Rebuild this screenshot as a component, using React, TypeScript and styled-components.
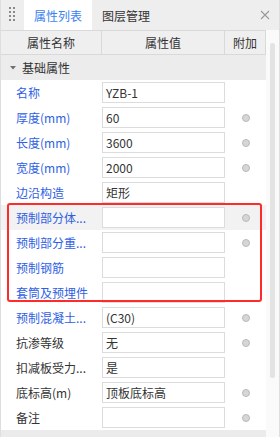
import React from 'react';
import styled, { createGlobalStyle } from 'styled-components';

const GlobalStyle = createGlobalStyle`
  html, body {
    margin: 0;
    padding: 0;
    background: #ffffff;
  }
  body {
    font-family: "Noto Sans CJK SC", "Noto Sans", sans-serif;
    font-size: 12px;
    color: #333;
  }
`;

const Panel = styled.div`
  width: 280px;
  height: 437px;
  box-sizing: border-box;
  border-left: 1px solid #dedede;
  border-right: 1px solid #dedede;
  display: flex;
  flex-direction: column;
  overflow: hidden;
`;

const TabBar = styled.div`
  height: 30px;
  flex-shrink: 0;
  display: flex;
  align-items: stretch;
  background: #eeeeee;
`;

const Grip = styled.div`
  width: 23px;
  display: flex;
  align-items: center;
  justify-content: center;
`;

const Tab = styled.div<{ $active?: boolean }>`
  display: flex;
  align-items: center;
  justify-content: center;
  padding: 0 10px;
  min-width: ${p => (p.$active ? '48px' : 'auto')};
  background: ${p => (p.$active ? '#ffffff' : 'transparent')};
  color: ${p => (p.$active ? '#3b82f0' : '#333')};
  font-size: 12px;
`;

const CloseButton = styled.div`
  margin-left: auto;
  width: 28px;
  display: flex;
  align-items: center;
  justify-content: center;
`;

const Body = styled.div`
  flex: 1;
  display: flex;
  min-height: 0;
`;

const Table = styled.div`
  width: 265px;
  display: flex;
  flex-direction: column;
`;

const Columns = `
  display: grid;
  grid-template-columns: 100px 124px 41px;
`;

const HeaderRow = styled.div`
  ${Columns}
  height: 23px;
  background: #efefef;
  border-top: 1px solid #d9d9d9;
  border-bottom: 1px solid #d9d9d9;
`;

const HeaderCell = styled.div`
  display: flex;
  align-items: center;
  justify-content: center;
  border-right: 1px solid #d9d9d9;
  color: #333;
  &:first-child { border-right: none; }
  &:nth-child(2) { border-left: 1px solid #d9d9d9; }
`;

const GroupRow = styled.div`
  height: 25px;
  display: flex;
  align-items: center;
  gap: 6px;
  padding-left: 9px;
  background: #ececec;
  color: #333;
`;

const Rows = styled.div`
  display: flex;
  flex-direction: column;
`;

const Marked = styled.div`
  position: relative;
  &::after {
    content: '';
    position: absolute;
    top: -2px;
    left: 6px;
    right: 4px;
    bottom: 3px;
    border: 2px solid #ff2a2a;
    border-radius: 3px;
    pointer-events: none;
  }
`;

const Row = styled.div<{ $hover?: boolean }>`
  ${Columns}
  height: 25px;
  background: ${p => (p.$hover ? '#f2f2f2' : '#ffffff')};
`;

const Label = styled.div<{ $linked?: boolean }>`
  display: flex;
  align-items: center;
  padding-left: 15px;
  white-space: nowrap;
  overflow: hidden;
  color: ${p => (p.$linked ? '#2f5fe3' : '#333')};
`;

const ValueCell = styled.div`
  display: flex;
  align-items: center;
  padding-left: 1px;
`;

const ValueBox = styled.div`
  box-sizing: border-box;
  width: 123px;
  height: 21px;
  border: 1px solid #dcdcdc;
  background: #ffffff;
  padding-left: 3px;
  display: flex;
  align-items: center;
  color: #333;
  font-size: 12px;
  white-space: nowrap;
  overflow: hidden;
`;

const ExtraCell = styled.div`
  display: flex;
  align-items: center;
  justify-content: center;
`;

const Dot = styled.span`
  width: 8px;
  height: 8px;
  box-sizing: border-box;
  border-radius: 50%;
  background: #d6d6d6;
  border: 1px solid #b9b9b9;
`;

const Footer = styled.div`
  height: 7px;
  background: #ebebeb;
`;

const ScrollColumn = styled.div`
  flex: 1;
  background: #fafafa;
  padding-top: 13px;
  padding-left: 4px;
`;

const Thumb = styled.div`
  width: 5px;
  height: 335px;
  border-radius: 2px;
  background: #e3e3e3;
`;

type Prop = {
  label: string;
  value: string;
  linked?: boolean;
  dot?: boolean;
  hover?: boolean;
};

const before: Prop[] = [
  { label: '名称', value: 'YZB-1', linked: true },
  { label: '厚度(mm)', value: '60', linked: true, dot: true },
  { label: '长度(mm)', value: '3600', linked: true, dot: true },
  { label: '宽度(mm)', value: '2000', linked: true, dot: true },
  { label: '边沿构造', value: '矩形', linked: true },
];

const marked: Prop[] = [
  { label: '预制部分体...', value: '', linked: true, dot: true, hover: true },
  { label: '预制部分重...', value: '', linked: true, dot: true },
  { label: '预制钢筋', value: '', linked: true },
  { label: '套筒及预埋件', value: '', linked: true },
];

const after: Prop[] = [
  { label: '预制混凝土...', value: '(C30)', linked: true, dot: true },
  { label: '抗渗等级', value: '无', dot: true },
  { label: '扣减板受力...', value: '是' },
  { label: '底标高(m)', value: '顶板底标高', dot: true },
  { label: '备注', value: '', dot: true },
];

const PropRow: React.FC<{ item: Prop }> = ({ item }) => (
  <Row $hover={item.hover}>
    <Label $linked={item.linked}>{item.label}</Label>
    <ValueCell>
      <ValueBox>{item.value}</ValueBox>
    </ValueCell>
    <ExtraCell>{item.dot && <Dot />}</ExtraCell>
  </Row>
);

const GripIcon = () => (
  <svg width="8" height="16" viewBox="0 0 8 16">
    {[0, 4, 8, 12].map(y => (
      <React.Fragment key={y}>
        <rect x="0" y={y} width="2" height="2" fill="#8a8a8a" />
        <rect x="4" y={y} width="2" height="2" fill="#8a8a8a" />
      </React.Fragment>
    ))}
  </svg>
);

const CloseIcon = () => (
  <svg width="10" height="10" viewBox="0 0 10 10">
    <path d="M1 1 L9 9 M9 1 L1 9" stroke="#9a9a9a" strokeWidth="1.1" fill="none" />
  </svg>
);

const Caret = () => (
  <svg width="6" height="4" viewBox="0 0 6 4">
    <path d="M0 0 L6 0 L3 3.5 Z" fill="#707070" />
  </svg>
);

const App: React.FC = () => (
  <>
    <GlobalStyle />
    <Panel>
      <TabBar>
        <Grip><GripIcon /></Grip>
        <Tab $active>属性列表</Tab>
        <Tab>图层管理</Tab>
        <CloseButton><CloseIcon /></CloseButton>
      </TabBar>
      <Body>
        <Table>
          <HeaderRow>
            <HeaderCell>属性名称</HeaderCell>
            <HeaderCell>属性值</HeaderCell>
            <HeaderCell>附加</HeaderCell>
          </HeaderRow>
          <GroupRow>
            <Caret />
            <span>基础属性</span>
          </GroupRow>
          <Rows>
            {before.map(item => <PropRow key={item.label} item={item} />)}
            <Marked>
              {marked.map(item => <PropRow key={item.label} item={item} />)}
            </Marked>
            {after.map(item => <PropRow key={item.label} item={item} />)}
          </Rows>
          <Footer />
        </Table>
        <ScrollColumn>
          <Thumb />
        </ScrollColumn>
      </Body>
    </Panel>
  </>
);

export default App;
